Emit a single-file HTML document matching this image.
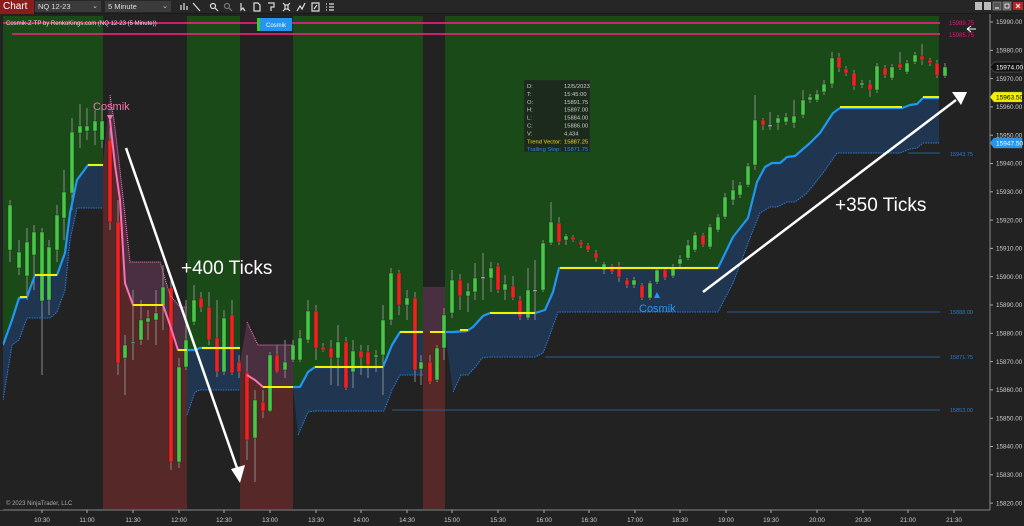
<!DOCTYPE html>
<html><head><meta charset="utf-8"><style>
*{margin:0;padding:0;box-sizing:border-box}
html,body{width:1024px;height:526px;overflow:hidden;background:#222;font-family:"Liberation Sans",sans-serif}
#tb{position:absolute;left:0;top:0;width:1024px;height:14px;background:#262626;border-bottom:1px solid #1a1a1a}
.tab{position:absolute;left:0;top:0;width:34px;height:14px;background:#8b1c1c;color:#fff;font-size:10px;line-height:14px;padding-left:3px}
.dd{position:absolute;top:1px;height:11px;background:#3b3b3b;color:#ddd;font-size:7.5px;line-height:11px;padding-left:3px}
.dd span{position:absolute;right:3px;top:0;color:#ccc;font-size:7px}
svg{position:absolute;left:0;top:0}
</style></head><body>
<div id="tb">
<div class="tab">Chart</div>
<div class="dd" style="left:35px;width:66px">NQ 12-23<span>⌄</span></div>
<div class="dd" style="left:105px;width:66px">5 Minute<span>⌄</span></div>
</div>
<svg id="s" width="1024" height="526" viewBox="0 0 1024 526" xmlns="http://www.w3.org/2000/svg" font-family="Liberation Sans, sans-serif">
<!-- toolbar icons -->
<g stroke="#ddd" fill="none" stroke-width="1.2">
<path d="M181 10V5M184 10V3M187 10V6"/>
<path d="M193 3l7 8"/>
<circle cx="213" cy="6" r="2.5"/><path d="M215 8l3 3"/>
<circle cx="227" cy="6" r="2.5" stroke="#777"/><path d="M229 8l3 3" stroke="#777"/>
<path d="M241 3v7l2-2 2 3"/>
<path d="M254 3h4l2 2v6h-6z"/>
<path d="M268 3h6v4h-3v4"/>
<path d="M283 3l2 2M290 3l-2 2M283 11l2-2M290 11l-2-2M285 5h3v4h-3z"/>
<path d="M297 11l3-5 2 3 3-6"/>
<path d="M312 3h7v8h-7zM314 9l3-4"/>
<path d="M326 4h1M329 4h5M326 7h1M329 7h5M326 10h1M329 10h5"/>
</g>
<g>
<rect x="975" y="2" width="7" height="8" fill="#bbb"/><rect x="984" y="2" width="7" height="8" fill="#bbb"/>
<rect x="993" y="2" width="8" height="8" fill="#555" stroke="#999" stroke-width=".6"/><path d="M995 8h4" stroke="#fff"/>
<rect x="1003" y="2" width="8" height="8" fill="#555" stroke="#999" stroke-width=".6"/><rect x="1005" y="4" width="4" height="4" fill="none" stroke="#fff" stroke-width=".8"/>
<rect x="1013" y="2" width="10" height="8" fill="#b22"/><path d="M1016 4l4 4M1020 4l-4 4" stroke="#fff"/>
</g>
<g id="bg"></g>
<g id="ov"></g>
</svg>
<script>
var S=document.getElementById('bg'),O=document.getElementById('ov');
function el(p,tag,a,txt){var e=document.createElementNS('http://www.w3.org/2000/svg',tag);for(var k in a)e.setAttribute(k,a[k]);if(txt)e.textContent=txt;p.appendChild(e);return e;}
function pts(a){return a.map(function(p){return p.join(',')}).join(' ');}
var TOP=16,BOT=509;
// base
el(S,'rect',{x:3,y:TOP,width:986,height:BOT-TOP,fill:'#222'});
// bull segments: blue line, dotted line
var bull=[
 {b:[[3,345],[12,320],[19,298],[27,297],[35,275],[57,275],[65,253],[70,213],[77,180],[88,165],[103,165]],
  d:[[3,400],[12,345],[19,340],[27,318],[50,318],[57,312],[65,290],[70,240],[77,208],[103,208]]},
 {b:[[187,350],[195,350],[200,348],[240,348]],d:[[187,415],[195,392],[200,390],[240,390]]},
 {b:[[293,387],[300,387],[308,372],[315,367],[383,367],[392,345],[400,332],[423,332]],
  d:[[298,435],[308,412],[315,411],[384,411],[392,390],[400,375],[423,375]]},
 {b:[[445,332],[453,332],[467,331],[473,327],[483,316],[490,313],[535,313],[545,310],[553,292],[559,268],[718,268],[733,237],[748,218],[757,182],[765,167],[772,163],[780,163],[787,157],[795,156],[810,143],[820,133],[833,113],[840,108],[902,108],[910,105],[917,104],[923,98],[939,98]],
  d:[[453,392],[461,375],[468,375],[477,365],[482,358],[490,357],[535,357],[543,353],[548,340],[558,312],[718,312],[733,283],[753,230],[760,213],[770,207],[777,207],[787,202],[795,202],[807,193],[823,173],[837,153],[900,153],[910,149],[917,148],[923,143],[939,143]]}
];
bull.forEach(function(s){
 var b=s.b,d=s.d;
 el(S,'polygon',{points:pts([[b[0][0],TOP]].concat(b,[[b[b.length-1][0],TOP]])),fill:'#1a4a17'});
 el(S,'polygon',{points:pts(b.concat(d.slice().reverse())),fill:'#1f3550'});
});
var bear=[
 {u:[[103,165],[110,95],[114,120],[120,170],[125,215],[130,262],[160,262],[170,295],[180,307],[187,307]],
  l:[[103,165],[110,120],[115,165],[120,200],[125,283],[133,305],[163,305],[170,325],[178,350],[187,350]]},
 {u:[[240,363],[247,322],[258,345],[293,345]],l:[[240,372],[247,375],[255,380],[263,387],[293,387]]},
 {u:[[423,287],[445,287]],l:[[423,332],[445,332]]}
];
bear.forEach(function(s){
 var u=s.u,l=s.l;
 el(S,'polygon',{points:pts(u.concat([[u[u.length-1][0],BOT],[u[0][0],BOT]])),fill:'#562828'});
 el(S,'polygon',{points:pts(u.concat(l.slice().reverse())),fill:'#4a2f40'});
});
// horizontal level lines
[[392,410],[545,357],[727,312],[908,153]].forEach(function(h){el(S,'line',{x1:h[0],y1:h[1],x2:940,y2:h[1],stroke:'#2a5d96','stroke-width':1});});
[['15888.00',312],['15871.75',357],['15853.00',410],['15943.75',154]].forEach(function(t){el(S,'text',{x:950,y:t[1]+2,fill:'#2a7bd0','font-size':5.5},t[0]);});
// candles [x,o,c,h,l]
var C=[[10,250,205,200,262],[19,268,252,240,275],[27,276,242,228,300],[34,255,232,225,290],[42,301,232,228,375],[49,300,247,240,315],[57,250,215,205,262],[64,218,192,170,240],[72,193,132,118,210],[80,133,126,104,148],[87,131,126,108,140],[95,131,121,110,145],[102,140,121,105,148],
[110,140,222,128,230],[118,222,363,200,375],[125,358,345,335,395],[133,343,342,290,360],[141,340,320,300,345],[148,322,318,310,340],[156,320,313,290,345],[163,306,287,265,330],[171,288,462,280,470],[179,462,367,358,468],[186,367,340,300,370],
[194,322,300,285,325],[201,298,308,292,312],[209,307,340,292,345],[217,338,372,300,377],[224,372,318,310,375],[232,315,373,300,375],[239,362,372,355,378],
[247,372,440,355,460],[255,438,400,390,482],[263,402,411,390,418],[270,411,355,352,412],[277,355,372,345,373],[285,370,362,340,378],[293,360,345,340,362],
[300,360,338,330,362],[308,340,311,300,343],[316,311,348,305,360],[323,347,350,343,352],[331,348,358,340,385],[338,358,342,325,386],[346,342,388,337,390],[353,372,351,340,388],[361,351,358,345,375],[368,352,365,345,378],[376,357,355,350,372],[383,355,320,305,395],[391,320,273,268,325],[399,273,305,270,315],[407,305,298,290,320],[415,298,370,292,382],[421,369,362,355,385],
[430,362,382,355,384],[437,380,348,345,382],[444,348,315,308,360],
[452,313,280,270,318],[460,280,296,274,310],[468,296,291,283,312],[475,292,278,263,300],[483,277,277,253,300],[491,278,268,262,292],[498,266,290,263,293],[505,290,284,275,300],[513,286,298,276,300],[520,300,317,296,320],[528,318,290,268,320],[535,290,290,260,320],[543,290,243,240,292],[551,243,222,202,245],[559,223,242,217,245],[566,240,236,234,245],[573,237,240,235,242],[581,242,245,240,248],[588,245,250,243,252],[596,253,258,250,262],
[604,270,264,262,274],[612,266,272,264,274],[619,266,277,262,282],[627,280,285,278,288],[634,285,280,277,288],[642,285,298,283,300],[650,298,283,281,300],[657,282,270,268,284],[665,270,278,268,280],[673,276,267,264,278],[680,264,259,255,268],[688,258,245,240,260],[695,250,235,232,252],[703,235,245,233,247],[710,247,227,224,249],[718,230,217,214,232],[725,217,197,193,219],[733,200,190,180,205],[740,195,185,182,198],[748,185,166,163,187],[755,165,120,95,170],[763,120,125,118,130],[770,125,125,112,130],[778,123,118,115,130],[786,122,117,113,125],[794,123,116,100,128],[803,115,100,90,118],[810,100,97,94,103],[817,100,94,90,102],[824,92,84,80,95],[832,84,58,52,88],[839,57,68,53,72],[846,69,73,66,76],[854,73,86,70,90],[862,85,83,80,88],[870,84,90,80,97],[877,90,66,63,93],[885,68,75,65,78],[892,78,67,64,80],[900,64,68,52,70],[907,72,63,60,74],[915,62,55,52,64],[922,56,60,44,65],[930,60,63,58,66],[937,63,75,60,78],[945,76,67,63,78]];
C.forEach(function(c){
 var x=c[0];el(O,'line',{x1:x,y1:c[3],x2:x,y2:c[4],stroke:'#8a8a8a','stroke-width':1});
 var t=Math.min(c[1],c[2]),h=Math.max(1.5,Math.abs(c[1]-c[2]));
 var col=c[2]<c[1]?'#46c846':(c[2]>c[1]?'#f42020':'#ccc');
 el(O,'rect',{x:x-2,y:t,width:4,height:h,fill:col,stroke:'#222','stroke-width':0.4});
});
// lines
bull.forEach(function(s){
 el(O,'polyline',{points:pts(s.b),fill:'none',stroke:'#2196f3','stroke-width':2.2,'stroke-linejoin':'round'});
 el(O,'polyline',{points:pts(s.d),fill:'none',stroke:'#2a7bd8','stroke-width':1,'stroke-dasharray':'1.5 1'});
});
bear.forEach(function(s){
 el(O,'polyline',{points:pts(s.l.slice(1)),fill:'none',stroke:'#ff6fb5','stroke-width':2,'stroke-linejoin':'round'});
 el(O,'polyline',{points:pts(s.u.slice(1)),fill:'none',stroke:'#ff7fc0','stroke-width':1,'stroke-dasharray':'1 1'});
});
// yellow lines
[[20,27,297],[35,57,275],[88,103,165],[133,163,305],[178,187,350],[202,240,348],[263,293,387],[315,383,367],[400,423,332],[430,445,332],[460,468,330],[490,535,313],[560,718,268],[840,902,107],[923,939,97]].forEach(function(y){
 el(O,'line',{x1:y[0],y1:y[2],x2:y[1],y2:y[2],stroke:'#f4f000','stroke-width':2});});
// pink top lines
el(O,'line',{x1:0,y1:23,x2:940,y2:23,stroke:'#ff1f8a','stroke-width':1.5});
el(O,'line',{x1:12,y1:34,x2:940,y2:34,stroke:'#ff1f8a','stroke-width':1.5});
el(O,'text',{x:949,y:25,fill:'#d81b7a','font-size':6},'15989.75');
el(O,'text',{x:949,y:37,fill:'#d81b7a','font-size':6},'15985.75');
el(O,'path',{d:'M967 29h9M967 29l4-3M967 29l4 3',stroke:'#fff','stroke-width':1,fill:'none'});
el(O,'text',{x:6,y:25,fill:'#ddd','font-size':6},'Cosmik-Z-TP by RenkoKings.com (NQ 12-23 (5 Minute))');
el(O,'rect',{x:257,y:18,width:3,height:13,fill:'#3c3'});
el(O,'rect',{x:260,y:18,width:32,height:13,fill:'#2196f3'});
el(O,'text',{x:276,y:27,fill:'#fff','font-size':6,'text-anchor':'middle'},'Cosmik');
// Cosmik signals
el(O,'text',{x:93,y:110,fill:'#ff70b0','font-size':11},'Cosmik');
el(O,'polygon',{points:'107,115 113,115 110,121',fill:'#ff70b0'});
el(O,'polygon',{points:'654,298 660,298 657,292',fill:'#2196f3'});
el(O,'text',{x:639,y:312,fill:'#2196f3','font-size':11},'Cosmik');
// arrows
el(O,'line',{x1:126,y1:148,x2:237,y2:468,stroke:'#fff','stroke-width':2.5});
el(O,'polygon',{points:'231,469 245,465 240,483',fill:'#fff'});
el(O,'line',{x1:703,y1:292,x2:956,y2:100,stroke:'#fff','stroke-width':2.5});
el(O,'polygon',{points:'952,92 967,92 961,105',fill:'#fff'});
el(O,'text',{x:181,y:274,fill:'#fff','font-size':19},'+400 Ticks');
el(O,'text',{x:835,y:211,fill:'#fff','font-size':19},'+350 Ticks');
// data box
el(O,'rect',{x:524,y:80,width:66,height:72,fill:'#1c2a1c',stroke:'#333','stroke-width':0.5});
var dl=[['D:','12/5/2023'],['T:','15:45:00'],['O:','15891.75'],['H:','15897.00'],['L:','15884.00'],['C:','15886.00'],['V:','4,434']];
dl.forEach(function(r,i){var y=88+i*7.9;el(O,'text',{x:527,y:y,fill:'#ccc','font-size':5.8},r[0]);el(O,'text',{x:564,y:y,fill:'#ccc','font-size':5.8},r[1]);});
el(O,'text',{x:527,y:143.3,fill:'#f0e000','font-size':5.8},'Trend Vector:');el(O,'text',{x:564,y:143.3,fill:'#f0e000','font-size':5.8},'15887.25');
el(O,'text',{x:527,y:151,fill:'#2a8ae8','font-size':5.8},'Trailing Stop:');el(O,'text',{x:564,y:151,fill:'#2a8ae8','font-size':5.8},'15871.75');
el(O,'text',{x:6,y:505,fill:'#aaa','font-size':6},'© 2023 NinjaTrader, LLC');
// axes
el(O,'rect',{x:990,y:14,width:34,height:512,fill:'#222'});
el(O,'rect',{x:0,y:510,width:1024,height:16,fill:'#222'});
el(O,'line',{x1:990,y1:14,x2:990,y2:510,stroke:'#888','stroke-width':1});
el(O,'line',{x1:0,y1:510,x2:990,y2:510,stroke:'#888','stroke-width':1});
el(O,'rect',{x:0,y:14,width:3,height:496,fill:'#222'});
for(var p=15990;p>=15820;p-=10){var y=22+(15990-p)*2.83;el(O,'line',{x1:990,y1:y,x2:993,y2:y,stroke:'#aaa'});el(O,'text',{x:996,y:y+2.2,fill:'#ccc','font-size':6.3},p+'.00');}
function mk(y,t,bg,fg){el(O,'polygon',{points:(990)+','+y+' 994,'+(y-5)+' 1022,'+(y-5)+' 1022,'+(y+5)+' 994,'+(y+5),fill:bg,stroke:'#888','stroke-width':0.4});el(O,'text',{x:996,y:y+2.3,fill:fg,'font-size':6.5},t);}
mk(67,'15974.00','#111','#fff');mk(97,'15963.50','#f4f000','#000');mk(143,'15947.50','#2196f3','#fff');
var T=[['10:30',42],['11:00',87],['11:30',133],['12:00',179],['12:30',224],['13:00',270],['13:30',316],['14:00',361],['14:30',407],['15:00',452],['15:30',498],['16:00',544],['16:30',589],['17:00',635],['18:30',680],['19:00',726],['19:30',771],['20:00',817],['20:30',863],['21:00',908],['21:30',954]];
T.forEach(function(t){el(O,'line',{x1:t[1],y1:510,x2:t[1],y2:513,stroke:'#aaa'});el(O,'text',{x:t[1],y:522,fill:'#ccc','font-size':6.3,'text-anchor':'middle'},t[0]);});
</script>
</body></html>
